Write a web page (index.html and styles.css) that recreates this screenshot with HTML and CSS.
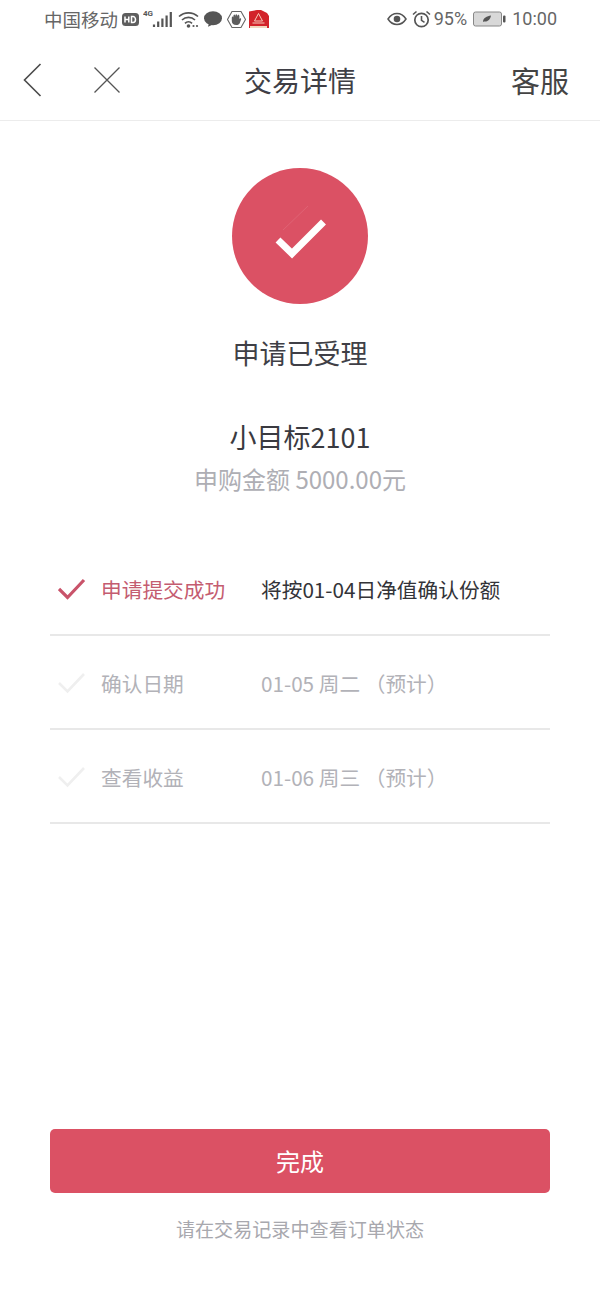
FILE: index.html
```html
<!DOCTYPE html>
<html lang="zh-CN">
<head>
<meta charset="utf-8">
<title>交易详情</title>
<link rel="stylesheet" href="styles.css">
</head>
<body>
<div class="page">
  <div class="status">
    <div class="status-left">
      <span class="carrier">中国移动</span>
      <svg class="ic" width="17" height="15" viewBox="0 0 17 15"><rect x="0" y="1" width="17" height="13" rx="3.500" fill="#5e5e5e"/><path d="M3 4.500v6M6.800 4.500v6M3 7.500h3.800" stroke="#fff" stroke-width="1.500" fill="none"/><path d="M9.500 4.500v6h1.500a2.500 3 0 0 0 0-6z" stroke="#fff" stroke-width="1.500" fill="none"/></svg>
      <svg class="ic ic-net" width="30" height="20" viewBox="0 0 30 20"><text x="0" y="7" class="net-text">4G</text><path d="M11 18v-2.500M15.200 18v-5.500M19.400 18v-8.500M23.600 18v-11.500M27.800 18v-15" stroke="#555" stroke-width="2.200" fill="none"/></svg>
      <svg class="ic ic-wifi" width="21" height="18" viewBox="0 0 21 18"><path d="M1 6.500a14 14 0 0 1 19 0M4 10a9.500 9.500 0 0 1 13 0M7 13.300a5 5 0 0 1 7 0" stroke="#555" stroke-width="1.700" fill="none"/><circle cx="10.500" cy="16" r="1.800" fill="#555"/><circle cx="15.500" cy="16" r="1.100" fill="#555"/><circle cx="19" cy="16" r="1.100" fill="#555"/></svg>
      <svg class="ic ic-chat" width="18" height="16" viewBox="0 0 18 16"><ellipse cx="9" cy="7.300" rx="9" ry="7" fill="#555"/><path d="M5 12l-1 3.800 5-2.300z" fill="#555"/></svg>
      <svg class="ic ic-hand" width="19" height="19" viewBox="0 0 19 19"><path d="M5 1.500h9l4.500 8-4.500 8H5l-4.500-8z" fill="#fff" stroke="#666" stroke-width="1.100"/><path d="M4.800 8c0-2 1.300-2 1.500-.5 0-3.700 1.900-3.700 2-.8 0-3.200 2-3.200 2.100-.1.200-2.500 2-2.300 2 0v2.500c.7-1.200 2-.8 1.700.3l-1.300 3.500c-.6 1.500-1.800 2.100-3.500 2.100-2.700 0-4.500-1.500-4.500-4z" fill="#5e5e5e"/></svg>
      <svg class="ic ic-app" width="20" height="20" viewBox="0 0 20 20"><path d="M0 2.500 8 1h4l6 3 2 3v12H0z" fill="#d2232a"/><path d="M9.500 4.500 5.500 12h8z" fill="none" stroke="#f6c9b8" stroke-width="1"/><path d="M3.500 14h12" stroke="#f6c9b8" stroke-width="1"/><rect x="1" y="17" width="17" height="2" fill="#f0d8c0"/></svg>
    </div>
    <div class="status-right">
      <svg class="ic" width="20" height="14" viewBox="0 0 20 14"><path d="M1 7c2.500-4 5.500-5.500 9-5.500S16.500 3 19 7c-2.500 4-5.500 5.500-9 5.500S3.500 11 1 7z" fill="none" stroke="#555" stroke-width="1.500"/><circle cx="10" cy="7" r="3.300" fill="#555"/></svg>
      <svg class="ic ic-alarm" width="19" height="18" viewBox="0 0 19 18"><circle cx="9.500" cy="10" r="6.700" fill="none" stroke="#555" stroke-width="1.700"/><path d="M9.500 6v4.300l3 2" fill="none" stroke="#555" stroke-width="1.600"/><path d="M1 4.500 4.500 1.500M18 4.500 14.500 1.500" stroke="#555" stroke-width="1.600" fill="none"/></svg>
      <span class="pct">95%</span>
      <svg class="ic ic-batt" width="33" height="16" viewBox="0 0 33 16"><rect x="0.500" y="1" width="28" height="14" rx="2" fill="#d8d8d8" stroke="#888"/><path d="M10 11c0-4 4-6 8-6.500-.5 4-3.500 6.500-7 6z" fill="#555"/><rect x="30" y="4.500" width="2.500" height="7" rx="1" fill="#555"/></svg>
      <span class="time">10:00</span>
    </div>
  </div>

  <header class="nav">
    <div class="nav-left">
      <svg width="20" height="34" viewBox="0 0 20 34"><path d="M17.500 1 1.500 17l16 16" fill="none" stroke="#4a4a4a" stroke-width="1.600"/></svg>
      <svg width="28" height="28" viewBox="0 0 28 28"><path d="M1.500 1.500l25 25M26.500 1.500l-25 25" fill="none" stroke="#555" stroke-width="1.300"/></svg>
    </div>
    <h1 class="nav-title">交易详情</h1>
    <a class="nav-service">客服</a>
  </header>

  <main class="result">
    <svg class="result-icon" width="136" height="136" viewBox="0 0 136 136">
      <circle cx="68" cy="68" r="68" fill="#db5164"/>
      <path d="M51 62 76 38" fill="none" stroke="#fff" stroke-opacity="0.100" stroke-width="1"/>
      <path d="M46 72 60 85.500 91.500 54" fill="none" stroke="#fff" stroke-width="7"/>
    </svg>
    <div class="result-title">申请已受理</div>
    <div class="product">小目标2101</div>
    <div class="amount">申购金额 5000.00元</div>
  </main>

  <section class="steps">
    <div class="step step-done">
      <svg class="step-check" width="28" height="22" viewBox="0 0 28 22"><path d="M1 11 9.500 19.500 26 2" fill="none" stroke="#c9536a" stroke-width="3.200"/></svg>
      <span class="step-label">申请提交成功</span>
      <span class="step-value">将按01-04日净值确认份额</span>
    </div>
    <div class="step">
      <svg class="step-check" width="28" height="22" viewBox="0 0 28 22"><path d="M1 11 9.500 19.500 26 2" fill="none" stroke="#efefef" stroke-width="2.600"/></svg>
      <span class="step-label">确认日期</span>
      <span class="step-value">01-05 周二 （预计）</span>
    </div>
    <div class="step">
      <svg class="step-check" width="28" height="22" viewBox="0 0 28 22"><path d="M1 11 9.500 19.500 26 2" fill="none" stroke="#efefef" stroke-width="2.600"/></svg>
      <span class="step-label">查看收益</span>
      <span class="step-value">01-06 周三 （预计）</span>
    </div>
  </section>

  <footer class="actions">
    <button class="done">完成</button>
    <p class="hint">请在交易记录中查看订单状态</p>
  </footer>
</div>
</body>
</html>
```

FILE: styles.css
```css
* { box-sizing: border-box; }
html, body { margin: 0; padding: 0; background: #fff; }
body { font-family: "Noto Sans CJK SC", "Noto Sans", sans-serif; }
.page { width: 600px; height: 1300px; display: flex; flex-direction: column; overflow: hidden; }

.status { height: 40px; padding: 0 43px 2px 44px; display: flex; justify-content: space-between; align-items: center; color: #666; }
.status-left, .status-right { display: flex; align-items: center; }
.carrier { font-size: 18.500px; line-height: 24px; margin-right: 4px; }
.ic { display: block; flex: none; }
.ic-net { margin-left: 4px; }
.net-text { font: bold 8px "Roboto", sans-serif; fill: #555; }
.ic-wifi { margin-left: 5px; }
.ic-chat { margin-left: 5px; }
.ic-hand { margin-left: 5px; }
.ic-app { margin-left: 3px; }
.ic-alarm { margin-left: 5px; }
.pct { font: 18px/24px "Roboto", sans-serif; margin-left: 3px; }
.ic-batt { margin-left: 6px; }
.time { font: 18px/24px "Roboto", sans-serif; margin-left: 6px; }

.nav { height: 81px; padding: 0 31px 0 23px; display: flex; align-items: center; justify-content: space-between; border-bottom: 1px solid #ececec; position: relative; }
.nav-left { display: flex; align-items: center; gap: 50px; }
.nav-title { position: absolute; left: 0; right: 0; text-align: center; margin: 0; font-size: 28px; font-weight: 400; color: #3f3f46; line-height: 40px; }
.nav-service { font-size: 29px; line-height: 40px; color: #444; }

.result { display: flex; flex-direction: column; align-items: center; padding-top: 47px; }
.result-icon { display: block; }
.result-title { margin-top: 29px; font-size: 27px; line-height: 40px; color: #3f3f46; }
.product { margin-top: 44px; font-size: 27px; line-height: 40px; color: #3a3a40; }
.amount { margin-top: 2px; font-size: 24px; line-height: 40px; color: #aeaeb4; }

.steps { margin: 43px 50px 0; }
.step { height: 94px; padding: 2px 0 0 8px; display: flex; align-items: center; border-bottom: 2px solid #e8e8e8; }
.step-check { flex: none; margin-right: 15px; }
.step-label { width: 160px; font-size: 20.700px; line-height: 30px; color: #b2b2b8; }
.step-value { font-size: 20.700px; line-height: 30px; color: #b2b2b8; }
.step-done .step-label { color: #c45c70; }
.step-done .step-value { color: #333338; }

.actions { margin: auto 50px 0; padding-bottom: 55px; display: flex; flex-direction: column; align-items: center; }
.done { width: 500px; height: 64px; border: 0; border-radius: 5px; padding-bottom: 3px; background: #db5164; color: #fff; font: inherit; font-size: 24px; }
.hint { margin: 20px 0 0; font-size: 19.100px; line-height: 32px; color: #a8a8ae; }
```
